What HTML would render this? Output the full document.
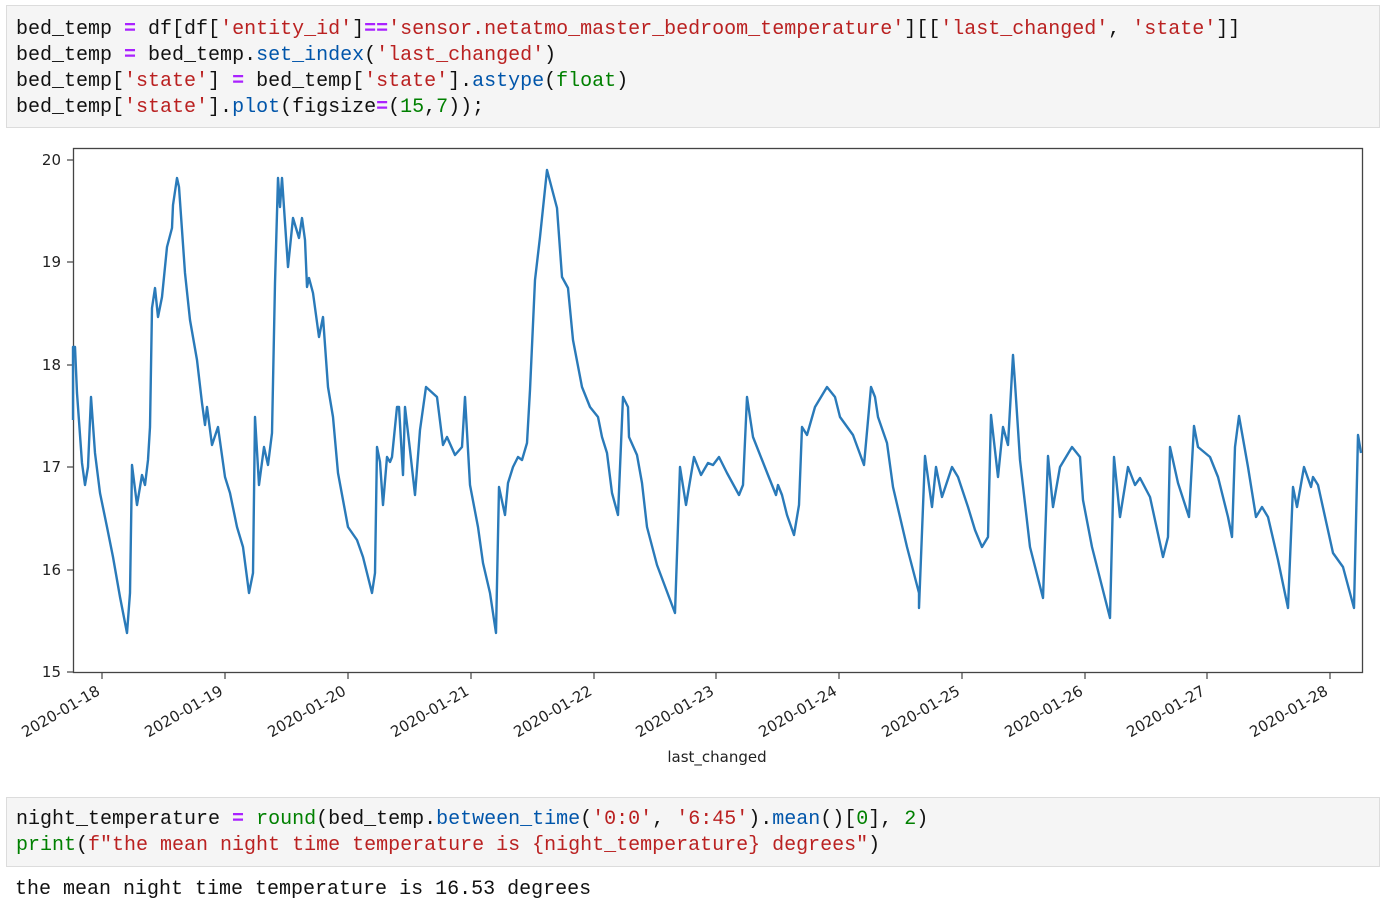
<!DOCTYPE html>
<html><head><meta charset="utf-8"><style>
html,body{margin:0;padding:0;background:#fff;width:1380px;height:912px;overflow:hidden}
.cell{position:absolute;left:6px;right:0;background:#f5f5f5;border:1px solid #dcdcdc;font-family:"Liberation Mono",monospace;font-size:20px;line-height:26px;color:#111;white-space:pre;padding:0 0 0 9px;box-sizing:border-box}
.k{color:#aa22ff;font-weight:bold}.s{color:#ba2121}.f{color:#0055aa}.n{color:#008000}.b{color:#008000}
.out{position:absolute;left:15px;top:877px;font-family:"Liberation Mono",monospace;font-size:20px;line-height:26px;color:#111;white-space:pre}
svg{position:absolute;left:0;top:0}
</style></head><body>
<div class="cell" style="top:5px;height:123px;padding-top:11px">bed_temp <span class="k">=</span> df[df[<span class="s">'entity_id'</span>]<span class="k">==</span><span class="s">'sensor.netatmo_master_bedroom_temperature'</span>][[<span class="s">'last_changed'</span>, <span class="s">'state'</span>]]
bed_temp <span class="k">=</span> bed_temp.<span class="f">set_index</span>(<span class="s">'last_changed'</span>)
bed_temp[<span class="s">'state'</span>] <span class="k">=</span> bed_temp[<span class="s">'state'</span>].<span class="f">astype</span>(<span class="b">float</span>)
bed_temp[<span class="s">'state'</span>].<span class="f">plot</span>(figsize<span class="k">=</span>(<span class="n">15</span>,<span class="n">7</span>));</div>
<svg width="1380" height="800" viewBox="0 0 1380 800" font-family="DejaVu Sans, sans-serif" font-size="15" fill="#222">
<rect x="73.5" y="148.5" width="1289" height="524" fill="none" stroke="#444" stroke-width="1.3"/>
<g stroke="#444" stroke-width="1.2">
<line x1="67" y1="672" x2="73" y2="672"/><line x1="67" y1="570" x2="73" y2="570"/><line x1="67" y1="467" x2="73" y2="467"/><line x1="67" y1="365" x2="73" y2="365"/><line x1="67" y1="262" x2="73" y2="262"/><line x1="67" y1="160" x2="73" y2="160"/>
<line x1="102" y1="673" x2="102" y2="679"/><line x1="225" y1="673" x2="225" y2="679"/><line x1="348" y1="673" x2="348" y2="679"/><line x1="471" y1="673" x2="471" y2="679"/><line x1="594" y1="673" x2="594" y2="679"/><line x1="716" y1="673" x2="716" y2="679"/><line x1="839" y1="673" x2="839" y2="679"/><line x1="962" y1="673" x2="962" y2="679"/><line x1="1085" y1="673" x2="1085" y2="679"/><line x1="1207" y1="673" x2="1207" y2="679"/><line x1="1330" y1="673" x2="1330" y2="679"/>
</g>
<g text-anchor="end">
<text x="61" y="677">15</text><text x="61" y="575">16</text><text x="61" y="472">17</text><text x="61" y="370">18</text><text x="61" y="267">19</text><text x="61" y="165">20</text>
</g>
<g text-anchor="end">
<text transform="translate(101,694) rotate(-30)">2020-01-18</text>
<text transform="translate(224,694) rotate(-30)">2020-01-19</text>
<text transform="translate(347,694) rotate(-30)">2020-01-20</text>
<text transform="translate(470,694) rotate(-30)">2020-01-21</text>
<text transform="translate(593,694) rotate(-30)">2020-01-22</text>
<text transform="translate(715,694) rotate(-30)">2020-01-23</text>
<text transform="translate(838,694) rotate(-30)">2020-01-24</text>
<text transform="translate(961,694) rotate(-30)">2020-01-25</text>
<text transform="translate(1084,694) rotate(-30)">2020-01-26</text>
<text transform="translate(1206,694) rotate(-30)">2020-01-27</text>
<text transform="translate(1329,694) rotate(-30)">2020-01-28</text>
</g>
<text x="717" y="762" text-anchor="middle">last_changed</text>
<polyline fill="none" stroke="#2a7ab9" stroke-width="2.4" stroke-linejoin="round" points="73,420 73,347 75,347 77,393 82,463 85,485 88,467 91,397 95,453 100,493 107,527 113,557 120,597 127,633 130,593 132,465 137,505 142,475 145,485 148,460 150,427 152,308 155,288 158,317 162,297 167,247 172,228 173,205 177,178 179,187 185,273 190,320 197,360 202,403 205,425 207,407 212,445 218,427 225,477 230,493 237,527 243,547 249,593 253,573 255,417 259,485 264,447 268,465 272,433 275,283 278,178 280,207 282,178 288,267 293,218 299,238 302,218 305,240 307,287 309,278 313,293 319,337 323,317 328,387 333,417 338,473 343,500 348,527 357,540 363,557 372,593 375,573 377,447 380,462 383,505 387,457 390,462 392,457 397,407 399,407 403,475 405,407 410,450 415,495 420,430 426,387 437,397 443,445 447,437 455,455 462,447 465,397 470,485 478,527 483,563 490,593 496,633 499,487 505,515 508,483 513,467 518,457 522,460 527,443 530,390 535,280 540,237 547,170 557,208 562,277 568,288 573,340 582,387 590,407 598,417 602,437 607,453 612,493 618,515 623,397 628,407 629,437 637,455 642,483 647,527 657,565 675,613 680,467 686,505 694,457 701,475 708,463 713,465 719,457 727,473 739,495 743,485 747,397 753,437 768,475 776,495 778,485 782,495 787,515 794,535 799,505 802,427 807,435 815,407 827,387 835,397 840,417 853,435 864,465 871,387 875,397 878,417 887,443 893,487 907,547 919,593 919,608 925,456 932,507 936,467 942,497 952,467 958,477 968,507 975,530 982,547 988,537 991,415 998,477 1003,427 1008,445 1013,355 1015,383 1020,460 1030,547 1043,598 1048,456 1053,507 1060,467 1072,447 1080,457 1083,500 1092,547 1110,618 1114,457 1120,517 1128,467 1135,485 1140,478 1150,497 1163,557 1168,537 1170,447 1178,483 1189,517 1194,426 1198,447 1210,457 1218,477 1228,517 1232,537 1235,447 1239,416 1248,467 1256,517 1262,507 1268,517 1278,560 1288,608 1293,487 1297,507 1304,467 1311,487 1313,477 1318,485 1333,553 1343,567 1354,608 1358,435 1361,453"/>
</svg>
<div class="cell" style="top:797px;height:70px;padding-top:9px">night_temperature <span class="k">=</span> <span class="b">round</span>(bed_temp.<span class="f">between_time</span>(<span class="s">'0:0'</span>, <span class="s">'6:45'</span>).<span class="f">mean</span>()[<span class="n">0</span>], <span class="n">2</span>)
<span class="b">print</span>(<span class="s">f"the mean night time temperature is {night_temperature} degrees"</span>)</div>
<div class="out">the mean night time temperature is 16.53 degrees</div>
</body></html>
